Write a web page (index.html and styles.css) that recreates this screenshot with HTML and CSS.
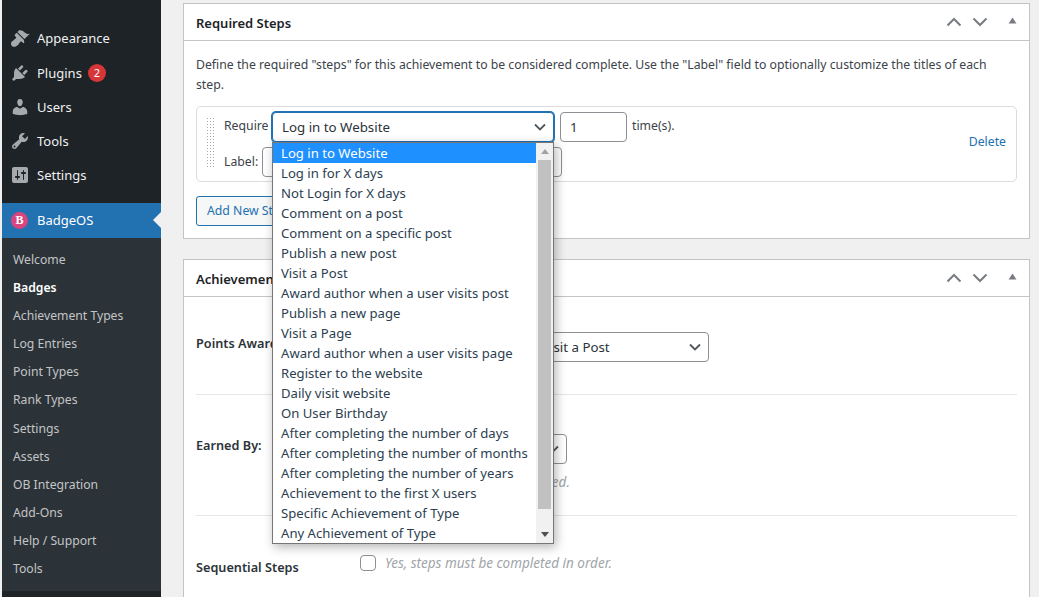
FILE: index.html
```html
<!DOCTYPE html>
<html lang="en">
<head>
<meta charset="utf-8">
<title>Edit Badge</title>
<link rel="stylesheet" href="styles.css">
</head>
<body>
<div class="page">
  <nav class="sidebar">
    <ul class="menu">
      <li class="menu-item"><svg class="menu-icon" viewBox="0 0 20 20"><path d="M14.48 11.06L7.41 3.99l1.5-1.5c.5-.56 2.3-.47 3.51.32 1.21.8 1.43 1.28 2.91 2.1 1.18.64 2.45 1.26 4.45.85zm-.71.71L6.7 4.7 4.93 6.47c-.39.39-.39 1.02 0 1.41l1.06 1.06c.39.39.39 1.03 0 1.42-.6.6-1.43 1.11-2.21 1.69-.35.26-.7.53-1.01.84C1.43 13.23 1 14.52 1 15.65c0 .82.31 1.62.93 2.23.6.6 1.4.93 2.22.93 1.13 0 2.42-.43 3.77-1.78.3-.31.58-.66.84-1.01.58-.78 1.09-1.61 1.69-2.21.39-.39 1.03-.39 1.42 0l1.06 1.06c.39.39 1.02.39 1.41 0z"/></svg><span>Appearance</span></li>
      <li class="menu-item"><svg class="menu-icon" viewBox="0 0 20 20"><path d="M13.11 4.36L9.87 7.6 8 5.73l3.24-3.24c.35-.34 1.05-.2 1.56.32.52.51.66 1.21.31 1.55zm-8 1.77l.91-1.12 9.01 9.01-1.19.84c-.71.71-2.63 1.16-3.82 1.16H6.14L4.9 17.26c-.59.59-1.54.59-2.12 0-.59-.58-.59-1.53 0-2.12l1.24-1.24v-3.88c0-1.13.4-3.19 1.09-3.89zm7.26 3.97l3.24-3.24c.34-.35 1.04-.21 1.55.31.52.51.66 1.21.31 1.55l-3.24 3.25z"/></svg><span>Plugins</span><b class="count">2</b></li>
      <li class="menu-item"><svg class="menu-icon" viewBox="0 0 20 20"><path d="M10 9.25c-2.27 0-2.73-3.44-2.73-3.44C7 4.02 7.82 2 9.97 2c2.16 0 2.98 2.02 2.71 3.81 0 0-.41 3.44-2.68 3.44zm0 2.57L12.72 10c2.39 0 4.52 2.33 4.52 4.53v2.49s-3.65 1.13-7.24 1.13c-3.65 0-7.24-1.13-7.24-1.13v-2.49c0-2.25 1.94-4.48 4.47-4.48z"/></svg><span>Users</span></li>
      <li class="menu-item"><svg class="menu-icon" viewBox="0 0 20 20"><path d="M16.68 9.77c-1.34 1.34-3.3 1.67-4.95.99l-5.41 6.52c-.99.99-2.59.99-3.58 0s-.99-2.59 0-3.57l6.52-5.42c-.68-1.65-.35-3.61.99-4.95 1.28-1.28 3.12-1.62 4.72-1.06l-2.89 2.89 2.82 2.82 2.86-2.87c.53 1.58.18 3.39-1.08 4.65zM3.81 16.21c.4.39 1.04.39 1.43 0 .4-.4.4-1.04 0-1.43-.39-.4-1.03-.4-1.43 0-.39.39-.39 1.03 0 1.43z"/></svg><span>Tools</span></li>
      <li class="menu-item"><svg class="menu-icon" viewBox="0 0 20 20"><path d="M18 16V4c0-1.1-.9-2-2-2H4c-1.1 0-2 .9-2 2v12c0 1.1.9 2 2 2h12c1.1 0 2-.9 2-2zM8 11h1c.55 0 1 .45 1 1s-.45 1-1 1H8v1.5c0 .28-.22.5-.5.5s-.5-.22-.5-.5V13H6c-.55 0-1-.45-1-1s.45-1 1-1h1V5.5c0-.28.22-.5.5-.5s.5.22.5.5V11zm5-2h-1c-.55 0-1-.45-1-1s.45-1 1-1h1V5.5c0-.28.22-.5.5-.5s.5.22.5.5V7h1c.55 0 1 .45 1 1s-.45 1-1 1h-1v5.5c0 .28-.22.5-.5.5s-.5-.22-.5-.5V9z"/></svg><span>Settings</span></li>
    </ul>
    <div class="menu-active">
      <span class="brand-icon">B</span><span>BadgeOS</span>
    </div>
    <ul class="submenu">
      <li>Welcome</li>
      <li class="current">Badges</li>
      <li>Achievement Types</li>
      <li>Log Entries</li>
      <li>Point Types</li>
      <li>Rank Types</li>
      <li>Settings</li>
      <li>Assets</li>
      <li>OB Integration</li>
      <li>Add-Ons</li>
      <li>Help / Support</li>
      <li>Tools</li>
    </ul>
  </nav>

  <main class="content">
    <section class="postbox first">
      <header class="postbox-head">
        <h2>Required Steps</h2>
        <div class="handles">
          <svg class="chev" viewBox="0 0 16 10"><path d="M1.500 8.500L8 2l6.500 6.500"/></svg>
          <svg class="chev" viewBox="0 0 16 10"><path d="M1.500 1.500L8 8l6.500-6.500"/></svg>
          <svg class="tri" viewBox="0 0 10 8"><path d="M5 .5L9.500 7.500H.5z"/></svg>
        </div>
      </header>
      <div class="postbox-body">
        <p class="intro">Define the required "steps" for this achievement to be considered complete. Use the "Label" field to optionally customize the titles of each step.</p>
        <div class="step">
          <div class="drag"></div>
          <div class="step-fields">
            <div class="step-row">
              <span class="step-label wide">Require</span>
              <div class="select-wrap">
                <div class="fake-select focused"><span>Log in to Website</span><svg class="caret" viewBox="0 0 12 8"><path d="M1 1.500L6 6.500l5-5"/></svg></div>
                <div class="dropdown">
                  <ul class="options">
                    <li class="selected">Log in to Website</li>
                    <li>Log in for X days</li>
                    <li>Not Login for X days</li>
                    <li>Comment on a post</li>
                    <li>Comment on a specific post</li>
                    <li>Publish a new post</li>
                    <li>Visit a Post</li>
                    <li>Award author when a user visits post</li>
                    <li>Publish a new page</li>
                    <li>Visit a Page</li>
                    <li>Award author when a user visits page</li>
                    <li>Register to the website</li>
                    <li>Daily visit website</li>
                    <li>On User Birthday</li>
                    <li>After completing the number of days</li>
                    <li>After completing the number of months</li>
                    <li>After completing the number of years</li>
                    <li>Achievement to the first X users</li>
                    <li>Specific Achievement of Type</li>
                    <li>Any Achievement of Type</li>
                  </ul>
                  <div class="scrollbar">
                    <svg class="scroll-arrow" viewBox="0 0 8 5"><path d="M4 0l4 5H0z"/></svg>
                    <div class="scroll-thumb"></div>
                    <svg class="scroll-arrow" viewBox="0 0 8 5"><path d="M0 0h8L4 5z"/></svg>
                  </div>
                </div>
              </div>
              <div class="field count-field">1</div>
              <span class="step-label times">time(s).</span>
            </div>
            <div class="step-row">
              <span class="step-label short">Label:</span>
              <div class="field label-field"></div>
            </div>
          </div>
          <a class="delete">Delete</a>
        </div>
        <div class="add-step">Add New Step</div>
      </div>
    </section>

    <section class="postbox last">
      <header class="postbox-head second">
        <h2>Achievement Data</h2>
        <div class="handles">
          <svg class="chev" viewBox="0 0 16 10"><path d="M1.500 8.500L8 2l6.500 6.500"/></svg>
          <svg class="chev" viewBox="0 0 16 10"><path d="M1.500 1.500L8 8l6.500-6.500"/></svg>
          <svg class="tri" viewBox="0 0 10 8"><path d="M5 .5L9.500 7.500H.5z"/></svg>
        </div>
      </header>
      <div class="meta">
        <div class="meta-row points">
          <div class="meta-label">Points Awarded</div>
          <div class="meta-field inline">
            <div class="field points-field">0</div>
            <div class="fake-select points-select"><span>Visit a Post</span><svg class="caret" viewBox="0 0 12 8"><path d="M1 1.500L6 6.500l5-5"/></svg></div>
          </div>
        </div>
        <div class="meta-row earned">
          <div class="meta-label">Earned By:</div>
          <div class="meta-field">
            <div class="fake-select earned-select"><span>Completing Steps</span><svg class="caret" viewBox="0 0 12 8"><path d="M1 1.500L6 6.500l5-5"/></svg></div>
            <p class="hint hint-block">How this achievement gets earned.</p>
          </div>
        </div>
        <div class="meta-row sequential">
          <div class="meta-label low">Sequential Steps</div>
          <div class="meta-field inline">
            <span class="checkbox"></span>
            <p class="hint">Yes, steps must be completed in order.</p>
          </div>
        </div>
      </div>
    </section>
  </main>
</div>
</body>
</html>
```
FILE: styles.css
```css
* { box-sizing: border-box; }
html, body { margin: 0; padding: 0; height: 597px; overflow: hidden; background: #fff; }
body { font-family: "Noto Sans", "Open Sans", sans-serif; font-size: 12.250px; line-height: 20px; color: #3c434a; }
ul { list-style: none; margin: 0; padding: 0; }
p { margin: 0; }

.page { width: 1039px; height: 597px; display: flex; padding-left: 2px; background: #f0f0f1; }

.sidebar { width: 159px; flex: none; height: 597px; background: #1d2327; color: #f0f0f1; padding-top: 21.400px; font-size: 13px; }
.menu { margin-bottom: 10.600px; }
.menu-item { height: 34.200px; display: flex; align-items: center; padding-left: 8px; }
.menu-icon { width: 20px; height: 20px; fill: #a7aaad; margin-right: 7px; flex: none; }
.count { width: 18px; height: 18px; margin-left: 6px; border-radius: 50%; background: #d63638; color: #fff; font-size: 11px; font-weight: 400; line-height: 18px; text-align: center; }

.menu-active { position: relative; height: 35px; display: flex; align-items: center; padding-left: 9px; background: #2271b1; color: #fff; }
.menu-active::after { content: ""; position: absolute; right: 0; top: 9px; border: 8px solid transparent; border-right-color: #f0f0f1; border-left-width: 0; }
.brand-icon { width: 17px; height: 17px; margin-right: 9px; border-radius: 50%; background: #d8457f; color: #fff; font-family: "Liberation Serif", serif; font-weight: 700; font-size: 12px; line-height: 17px; text-align: center; }

.submenu { height: 353px; background: #2c3338; padding-top: 7.870px; }
.submenu li { height: 28.150px; line-height: 28px; padding-left: 11px; color: #c3c4c7; font-size: 12.200px; }
.submenu .current { color: #fff; font-weight: 600; }

.content { flex: none; width: 847px; height: 597px; margin-left: 22px; padding-top: 3px; }

.postbox { width: 847px; background: #fff; border: 1px solid #c3c4c7; }
.postbox.first { height: 236px; margin-bottom: 20px; }
.postbox.last { height: 338px; border-bottom: 0; }
.postbox-head { height: 37px; border-bottom: 1px solid #c3c4c7; padding: 0 12px; display: flex; align-items: center; justify-content: space-between; }
h2 { margin: 2px 0 0; font-size: 13px; font-weight: 600; color: #1d2327; }
.handles { display: flex; align-items: center; }
.chev { width: 16px; height: 10px; fill: none; stroke: #787c82; stroke-width: 2; margin-right: 10px; }
.tri { width: 9px; height: 7px; fill: #787c82; margin-left: 10px; margin-top: -3px; }

.postbox-body { padding: 14px 12px 0; }
.step { display: flex; height: 76px; margin-top: 11px; border: 1px solid #dcdcde; border-radius: 5px; padding: 5px 10px 0 9px; }
.drag { width: 8px; height: 52px; margin: 5px 10px 0 0; flex: none; background-image: radial-gradient(circle, #a7aaad 0.7px, transparent 0.8px); background-size: 3px 3px; }
.step-fields { flex: none; display: flex; flex-direction: column; gap: 5px; }
.step-row { display: flex; align-items: flex-start; height: 30px; }
.step-label { line-height: 20px; padding-top: 4px; }
.step-label.wide { width: 48px; }
.step-label.short { width: 38px; padding-top: 5px; }
.step-label.times { margin-left: 5px; }
.select-wrap { position: relative; width: 282px; }
.fake-select { height: 30px; display: flex; align-items: center; justify-content: space-between; padding: 0 7px 0 9px; border: 1px solid #8c8f94; border-radius: 4px; background: #fff; font-size: 13.300px; color: #2c3338; }
.fake-select.focused { border-color: #2271b1; box-shadow: 0 0 0 1px #2271b1; }
.caret { width: 12px; height: 8px; fill: none; stroke: #50575e; stroke-width: 1.800; }
.field { height: 30px; border: 1px solid #8c8f94; border-radius: 4px; background: #fff; padding-left: 9px; line-height: 28px; font-size: 13.300px; color: #2c3338; }
.count-field { width: 67px; margin-left: 6px; }
.label-field { width: 300px; }
.delete { margin: 20px 0 0 auto; color: #2271b1; }

.add-step { margin-top: 14px; width: 110px; height: 30px; border: 1px solid #2271b1; border-radius: 3px; background: #f6f7f7; color: #2271b1; padding-left: 10px; line-height: 28px; }

.dropdown { position: absolute; left: 0; top: 30px; width: 282px; height: 402px; display: flex; border: 1px solid #767676; background: #fff; box-shadow: 2px 3px 10px rgba(0, 0, 0, .3); z-index: 5; }
.options { flex: 1; }
.options li { height: 20px; line-height: 20px; padding-left: 8px; font-size: 13.140px; color: #2c3e50; white-space: nowrap; }
.options .selected { background: #1e90ff; color: #fff; }
.scrollbar { width: 17px; flex: none; background: #f1f1f1; display: flex; flex-direction: column; align-items: center; }
.scroll-arrow { width: 8px; height: 5px; fill: #a3a3a3; margin: 6px 0; flex: none; }
.scroll-arrow:last-child { fill: #505050; margin-top: auto; margin-bottom: 6px; }
.scroll-thumb { width: 13px; height: 349px; background: #c1c1c1; }

.meta { padding: 0 12px; }
.meta-row { display: flex; border-bottom: 1px solid #e5e7e8; }
.meta-row:last-child { border-bottom: 0; }
.meta-row.points { height: 98px; padding-top: 35px; }
.meta-row.earned { height: 121px; padding-top: 39px; }
.meta-row.sequential { height: 81px; padding-top: 39px; }
.meta-label { width: 164px; flex: none; padding-top: 1px; font-size: 12.700px; font-weight: 600; color: #2c3338; }
.meta-label.low { padding-top: 2px; }
.meta-field.inline { display: flex; align-items: flex-start; }
.points-field { width: 172px; }
.points-select { width: 177px; }
.earned-select { width: 207px; }
.hint { font-size: 13.500px; font-style: italic; color: #a0a5aa; line-height: 18px; }
.hint-block { margin-top: 9px; word-spacing: .5px; }
.checkbox { width: 16px; height: 16px; border: 1px solid #8c8f94; border-radius: 4px; background: #fff; margin-right: 9px; flex: none; }
.sequential .hint { margin-top: -1px; }
```
